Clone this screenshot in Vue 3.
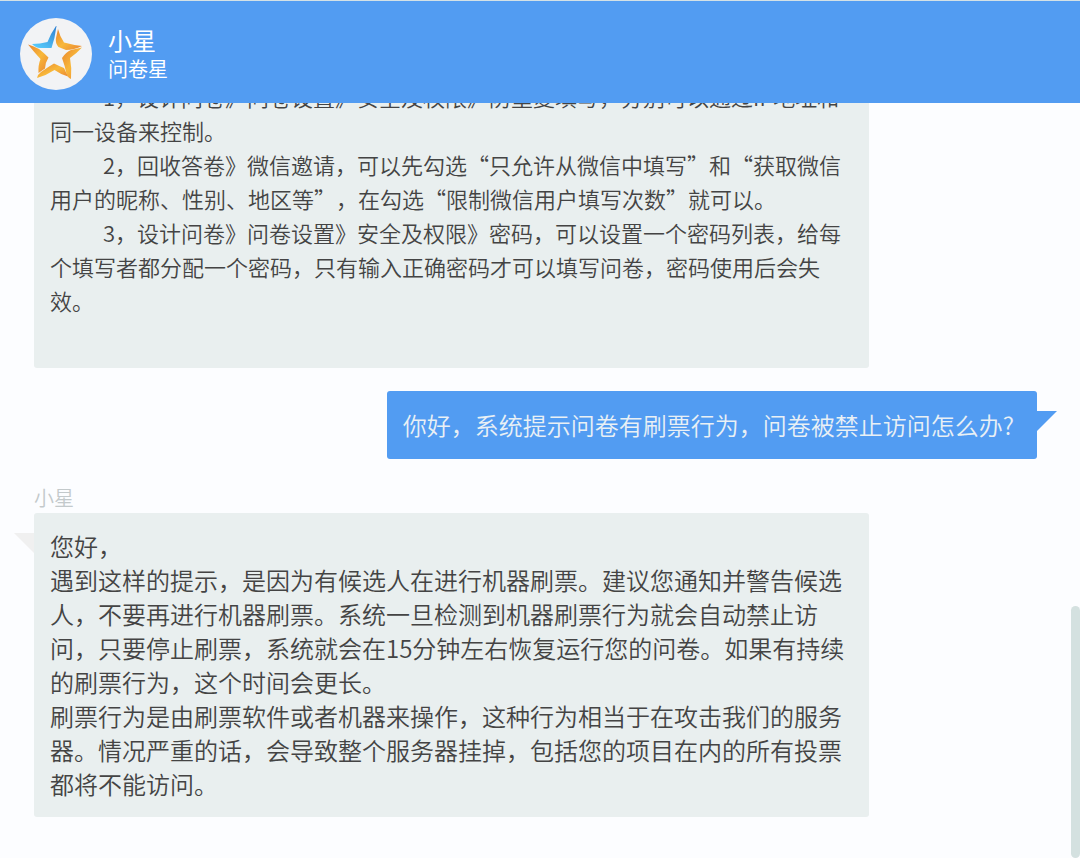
<script setup>
const tips = [
  '1，设计问卷》问卷设置》安全及权限》防重复填写，分别可以通过IP地址和同一设备来控制。',
  '2，回收答卷》微信邀请，可以先勾选“只允许从微信中填写”和“获取微信用户的昵称、性别、地区等”，在勾选“限制微信用户填写次数”就可以。',
  '3，设计问卷》问卷设置》安全及权限》密码，可以设置一个密码列表，给每个填写者都分配一个密码，只有输入正确密码才可以填写问卷，密码使用后会失效。',
]
const question = '你好，系统提示问卷有刷票行为，问卷被禁止访问怎么办?'
const answer = [
  '您好，',
  '遇到这样的提示，是因为有候选人在进行机器刷票。建议您通知并警告候选人，不要再进行机器刷票。系统一旦检测到机器刷票行为就会自动禁止访问，只要停止刷票，系统就会在15分钟左右恢复运行您的问卷。如果有持续的刷票行为，这个时间会更长。',
  '刷票行为是由刷票软件或者机器来操作，这种行为相当于在攻击我们的服务器。情况严重的话，会导致整个服务器挂掉，包括您的项目在内的所有投票都将不能访问。',
]
</script>

<template>
  <div class="chat" lang="zh-CN">
    <header class="top">
      <svg class="avatar" viewBox="0 0 72 72" aria-hidden="true">
        <defs>
          <linearGradient id="gold" x1="0" y1="0" x2="1" y2="1">
            <stop offset="0" stop-color="#e9852f" />
            <stop offset="0.5" stop-color="#f8b83a" />
            <stop offset="1" stop-color="#ea8432" />
          </linearGradient>
          <linearGradient id="sky" x1="1" y1="0" x2="0.3" y2="1">
            <stop offset="0" stop-color="#2f7fd0" />
            <stop offset="1" stop-color="#55c8fa" />
          </linearGradient>
        </defs>
        <circle cx="36" cy="36" r="36" fill="#f2f3f5" />
        <path fill="url(#sky)" d="M36 8 Q31 15 27.5 24 Q20 26 12 26 Q16 30 20 30 L31.5 30 Q35 20 36.5 8 Z" />
        <path fill="url(#gold)" d="M38 11 Q40 19 44 24.5 Q53 27 62 28 Q54 32 46 32 Q41 30 38.5 29 Q35 25 36 20 Z" />
        <path fill="url(#gold)" d="M62 29.5 Q56 36 50 40 Q52 50 51 61 Q48 60 46.5 56 Q45 48 42 40 Q46 34 51 32 Z" />
        <path fill="url(#gold)" d="M48 58.5 Q40 56 34.5 52 Q27 57 17 60 Q18 56 21 54 Q28 49 34 45.5 Q39 48 44 50 Z" />
        <path fill="url(#gold)" d="M18.5 55 Q18 47 20.5 41 Q14 34 8 26.5 Q14 28 19 31 Q24 35 28.5 39.5 Q25 45 25 50.5 Z" />
      </svg>
      <div class="who">
        <h1 class="name">小星</h1>
        <p class="org">问卷星</p>
      </div>
    </header>

    <main class="body">
      <div class="messages">
        <article class="bubble bot tips">
          <p v-for="tip in tips" :key="tip">{{ tip }}</p>
        </article>
        <article class="bubble user">
          <p>{{ question }}</p>
        </article>
        <section class="reply">
          <h2 class="sender">小星</h2>
          <article class="bubble bot tailed">
            <p v-for="line in answer" :key="line">{{ line }}</p>
          </article>
        </section>
      </div>
      <div class="thumb"></div>
    </main>
  </div>
</template>

<style>
body {
  margin: 0;
}
</style>

<style scoped>
.chat {
  display: flex;
  flex-direction: column;
  height: 100vh;
  background: #fcfdff;
  color: #444;
  font-family: "Noto Sans CJK SC", "Noto Sans", sans-serif;
  font-weight: 350;
  text-spacing-trim: space-all;
}
h1,
h2,
p {
  margin: 0;
  font-weight: inherit;
}
.top {
  display: flex;
  flex: none;
  align-items: center;
  gap: 16px;
  padding: 17px 20px 13px;
  border-top: 1px solid #d4e1e6;
  background: #529cf2;
  color: #fff;
  font-weight: 400;
}
.avatar {
  width: 72px;
  height: 72px;
}
.name {
  font-size: 24px;
  line-height: 30px;
}
.org {
  font-size: 20px;
  line-height: 28px;
}
.body {
  position: relative;
  display: flex;
  flex: 1;
  flex-direction: column;
  justify-content: flex-end;
  min-height: 0;
  overflow: hidden;
}
.messages {
  display: flex;
  flex: none;
  flex-direction: column;
  gap: 23px;
  padding: 0 43px 41px 34px;
}
.bubble {
  position: relative;
  box-sizing: border-box;
  padding: 16px;
  border-radius: 3px;
  font-size: 24px;
  line-height: 34px;
}
.bot {
  width: 835px;
  max-width: 100%;
  background: #e9efef;
}
.tips {
  padding-bottom: 51px;
  font-size: 22px;
}
.tips p {
  text-indent: 53px;
}
.user {
  align-self: flex-end;
  padding: 17px 23px 17px 16px;
  background: #529cf2;
  color: #e9f0f5;
}
.user::after,
.tailed::before {
  position: absolute;
  top: 20px;
  width: 20px;
  height: 20px;
  content: "";
}
.user::after {
  left: 100%;
  background: #529cf2;
  clip-path: polygon(0 0, 100% 0, 0 100%);
}
.tailed::before {
  right: 100%;
  background: #f0f0f0;
  clip-path: polygon(0 0, 100% 0, 100% 100%);
}
.sender {
  color: #c3c9cb;
  font-size: 20px;
  line-height: 31px;
}
.thumb {
  position: absolute;
  right: 0;
  bottom: 0;
  width: 9px;
  height: 33.4%;
  border-radius: 5px;
  background: #d4e1e0;
}
</style>
